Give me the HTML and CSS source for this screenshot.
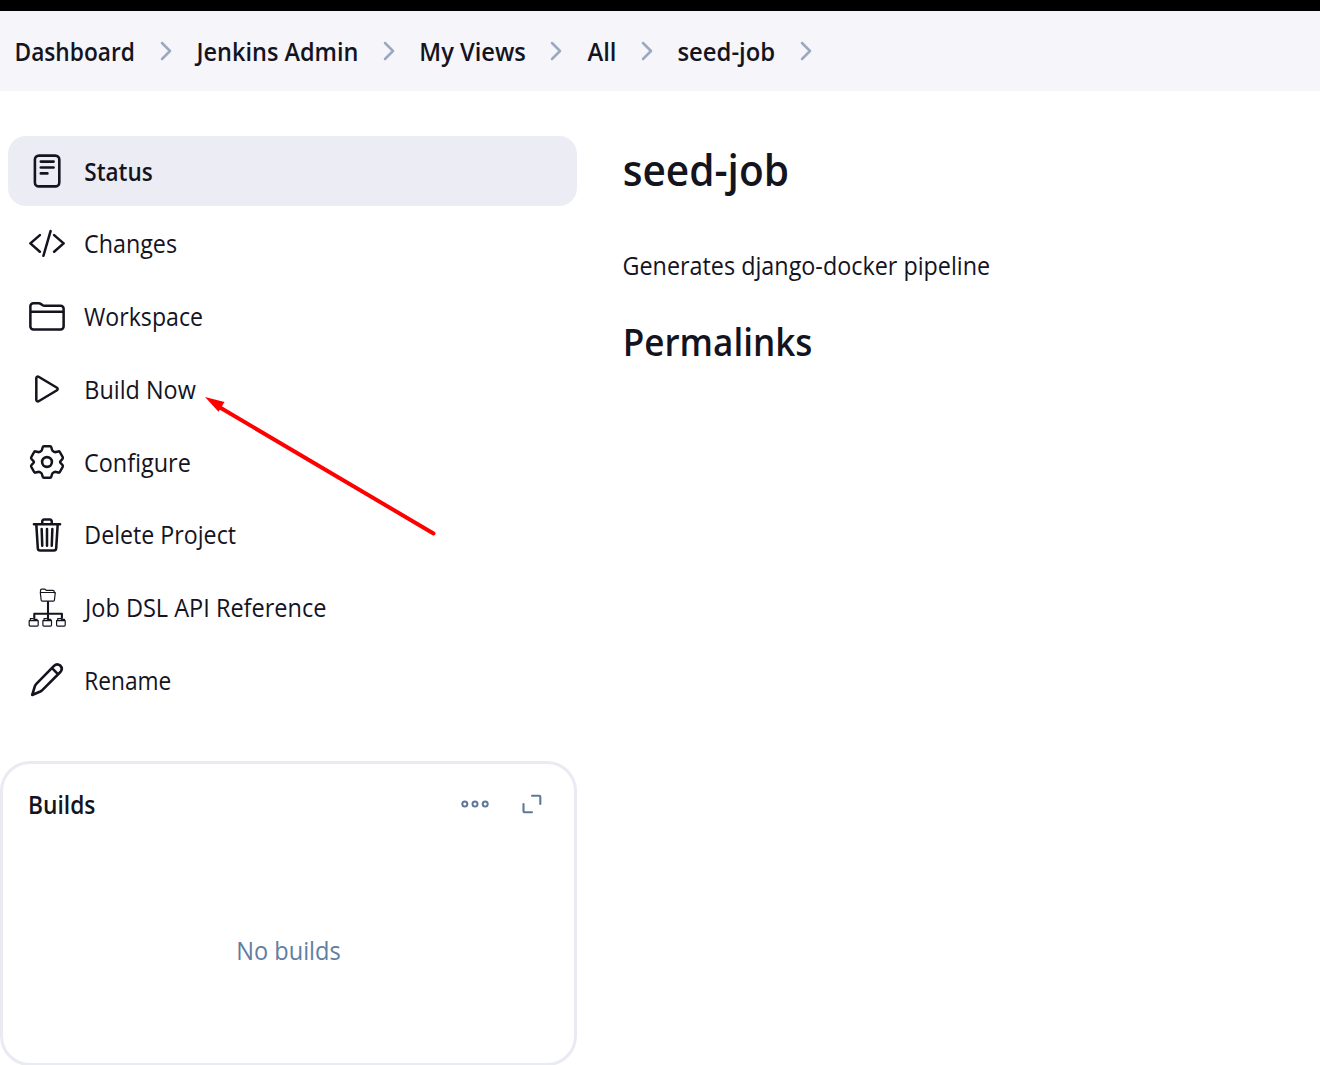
FILE: index.html
```html
<!DOCTYPE html>
<html lang="en">
<head>
<meta charset="utf-8">
<title>seed-job [Jenkins]</title>
<link rel="stylesheet" href="styles.css">
</head>
<body>
<div class="topbar"></div>
<nav class="breadcrumbs">
  <a class="crumb crumb-dashboard">Dashboard</a>
  <svg class="chevron" viewBox="0 0 12 20"><path d="M2 2l8 8-8 8"/></svg>
  <a class="crumb crumb-admin">Jenkins Admin</a>
  <svg class="chevron" viewBox="0 0 12 20"><path d="M2 2l8 8-8 8"/></svg>
  <a class="crumb crumb-views">My Views</a>
  <svg class="chevron" viewBox="0 0 12 20"><path d="M2 2l8 8-8 8"/></svg>
  <a class="crumb crumb-all">All</a>
  <svg class="chevron" viewBox="0 0 12 20"><path d="M2 2l8 8-8 8"/></svg>
  <a class="crumb crumb-job">seed-job</a>
  <svg class="chevron" viewBox="0 0 12 20"><path d="M2 2l8 8-8 8"/></svg>
</nav>
<div class="page">
  <aside class="side">
    <div class="tasks">
      <a class="task active">
        <svg class="icon" viewBox="0 0 38 38"><rect x="6.900" y="3.600" width="24.400" height="30.800" rx="4"/><path d="M12.800 9.600h12.800M12.800 15.500h12.800M12.800 21.400h6.600"/></svg>
        <span class="t-status">Status</span>
      </a>
      <a class="task">
        <svg class="icon" viewBox="0 8 512 512"><g class="wide"><path d="M160 368L32 256l128-112M352 368l128-112-128-112M304 90l-96 332"/></g></svg>
        <span class="t-changes">Changes</span>
      </a>
      <a class="task">
        <svg class="icon" viewBox="0 8 512 512"><g class="wide"><path d="M440 432H72a40 40 0 01-40-40V120a40 40 0 0140-40h75.890a40 40 0 0122.190 6.720l27.840 18.560a40 40 0 0022.190 6.720H440a40 40 0 0140 40v240a40 40 0 01-40 40zM32 192h448"/></g></svg>
        <span class="t-workspace">Workspace</span>
      </a>
      <a class="task">
        <svg class="icon" viewBox="0 0 512 512"><g class="wide"><path d="M112 111v290c0 17.440 17 28.520 31 20.160l247.900-148.370c12.120-7.250 12.120-26.330 0-33.580L143 90.840c-14-8.360-31 2.720-31 20.160z"/></g></svg>
        <span class="t-build">Build Now</span>
      </a>
      <a class="task">
        <svg class="icon" viewBox="0 0 38 38"><path transform="translate(1.100 0) scale(.942 1)" d="M15.700 3.300h6.600q1 0 1.300 1l.8 2.700q.3 1 1.300 1.400l1 .5q.8.400 1.800.2l2.700-.7q1-.2 1.500.7l3 5.100q.5.900-.2 1.600l-1.900 2q-.7.800-.7 1.200t.7 1.200l1.900 2q.7.800.2 1.600l-3 5.100q-.5.900-1.500.7l-2.700-.7q-1-.2-1.800.2l-1 .5q-1 .4-1.300 1.400l-.8 2.700q-.3 1-1.300 1h-6.600q-1 0-1.300-1l-.8-2.700q-.3-1-1.300-1.400l-1-.5q-.8-.4-1.800-.2l-2.700.7q-1 .2-1.500-.7l-3-5.100q-.5-.9.2-1.600l1.900-2q.7-.8.7-1.200t-.7-1.200l-1.900-2q-.7-.8-.2-1.600l3-5.100q.5-.9 1.500-.7l2.700.7q1 .2 1.800-.2l1-.5q1-.4 1.300-1.400l.8-2.700q.3-1 1.300-1z"/><circle cx="19" cy="19" r="4.900"/></svg>
        <span class="t-configure">Configure</span>
      </a>
      <a class="task">
        <svg class="icon" viewBox="0 0 512 512"><g class="wide"><path d="M112 112l20 320c.950 18.490 14.400 32 32 32h184c17.670 0 30.870-13.510 32-32l20-320M80 112h352M192 112V72a23.930 23.930 0 0124-24h80a23.930 23.930 0 0124 24v40M256 176v224M184 176l8 224M328 176l-8 224"/></g></svg>
        <span class="t-delete">Delete Project</span>
      </a>
      <a class="task">
        <svg class="icon" viewBox="0 0 38 38"><path class="branch" d="M20 13v17M6.300 29v-4.300h27.600V29"/><g class="thin"><path d="M12.500 3.200V1.400q0-1.200 1.200-1.200h3.200l1.400 1.100h6.400q1.600 0 1.600 1.600v.8M12.300 3.500h15l-.9 7.800q-.1.900-1 .9H14.200q-.9 0-1-.9z"/><path d="M2.300 31.500v-1.900h3l.8.800h3v1.100M1.200 31.600h9v4.500q0 1-1 1h-7q-1 0-1-1zM16 31.500v-1.900h3l.8.800h3v1.100M14.900 31.600h8.600v4.500q0 1-1 1h-6.600q-1 0-1-1zM29.700 31.500v-1.900h3l.8.800h3v1.100M28.600 31.600h8.600v4.500q0 1-1 1h-6.600q-1 0-1-1z"/></g></svg>
        <span class="t-dsl">Job DSL API Reference</span>
      </a>
      <a class="task">
        <svg class="icon" viewBox="0 0 38 38"><path d="M4.200 34l2.700-8.800q.4-1.200 1.200-2L26 4.900q3-3 6.200-.4 3 3.200.2 6.500L14.300 29.100q-.8.800-2 1.400zM24 7.200l6.200 6.200"/></svg>
        <span class="t-rename">Rename</span>
      </a>
    </div>
    <section class="builds">
      <header class="builds-head">
        <h2>Builds</h2>
        <svg class="dots" viewBox="0 0 28 10"><circle cx="3.800" cy="5" r="2.500"/><circle cx="14" cy="5" r="2.500"/><circle cx="24.200" cy="5" r="2.500"/></svg>
        <svg class="expand" viewBox="0 0 20 20"><path d="M10 1.700h7.300q1 0 1 1V10M1.500 10v7.300q0 1 1 1H10"/></svg>
      </header>
      <p class="empty"><span>No builds</span></p>
    </section>
  </aside>
  <main class="main">
    <h1>seed-job</h1>
    <p class="description">Generates django-docker pipeline</p>
    <h2 class="permalinks">Permalinks</h2>
  </main>
</div>
<svg class="arrow" viewBox="0 0 240 150"><path class="shaft" d="M20 12.500l213.500 126"/><path class="head" d="M5 2l19.500 5-6 9.800z"/></svg>
</body>
</html>
```
FILE: styles.css
```css
* { box-sizing: border-box; }
body {
  margin: 0;
  height: 1065px;
  overflow: hidden;
  position: relative;
  background: #fff;
  color: #14141f;
  font-family: "Open Sans", "Noto Sans", sans-serif;
  font-size: 25px;
  line-height: 36px;
}
h1, h2, p { margin: 0; font-weight: 600; }
svg { display: block; flex: none; fill: none; stroke: currentColor; stroke-linecap: round; stroke-linejoin: round; }
.topbar { height: 11px; background: #000; }
.breadcrumbs {
  height: 80px;
  padding: 0 0 0 15px;
  display: flex;
  align-items: center;
  background: #f5f5fa;
  font-weight: 600;
}
/* Labels are condensed slightly from their left edge. */
.crumb, .task span, h1, h2, .description { transform-origin: 0 50%; }
.crumb { white-space: nowrap; padding-bottom: 1px; }
.crumb-dashboard { width: 120px; transform: translateX(-.5px) scaleX(.908); }
.crumb-admin { width: 162px; transform: translateX(.5px) scaleX(.939); }
.crumb-views { width: 106px; transform: translateX(.3px) scaleX(.948); }
.crumb-all { width: 30px; transform: translateX(1.500px) scaleX(.95); }
.crumb-job { width: 98px; transform: translateX(.5px) scaleX(.954); }
.chevron { width: 12px; height: 20px; margin: 0 24px 0 25px; color: #9aa9c0; stroke-width: 2.500; }
.page { display: flex; gap: 46px; }
.side { width: 577px; padding-top: 45px; }
.tasks { display: flex; flex-direction: column; gap: 2.750px; padding-left: 8px; }
.task {
  height: 70px;
  padding-left: 20px;
  display: flex;
  align-items: center;
  gap: 18px;
  border-radius: 18px;
  white-space: nowrap;
}
.task span { padding-bottom: 1px; }
.active { background: #ececf5; font-weight: 600; }
.task .t-status { padding-bottom: 0; transform: translateX(.3px) scaleX(.9); }
.t-changes { transform: scaleX(.932); }
.t-workspace { transform: scaleX(.925); }
.t-build { transform: translateX(.3px) scaleX(.936); }
.t-configure { transform: scaleX(.937); }
.t-delete { transform: translateX(.3px) scaleX(.928); }
.t-dsl { transform: translateX(1px) scaleX(.94); }
.t-rename { transform: translateX(.3px) scaleX(.908); }
.icon { width: 38px; height: 38px; stroke-width: 2.600; overflow: visible; }
.wide { stroke-width: 34; }
.thin { stroke-width: 1.200; }
.branch { stroke-width: 2.100; }
.builds {
  margin-top: 45.500px;
  height: 305px;
  border: 3px solid #eaeaf3;
  border-radius: 30px;
}
.builds-head { display: flex; align-items: center; padding: 20px 32px 0 25px; height: 60px; color: #607898; }
.builds h2 { flex: 1; font-size: 25px; color: #14141f; transform: scaleX(.91); }
.dots { width: 28px; height: 10px; stroke-width: 2; }
.expand { width: 20px; height: 20px; margin-left: 33px; stroke-width: 2.100; }
.empty { text-align: center; font-weight: 400; color: #607ea0; padding-top: 108px; transform: scaleX(.942); }
.main { padding-top: 49px; }
h1 { font-size: 43px; line-height: 60px; transform: translateX(-.3px) scaleX(.944); }
.description { font-weight: 400; margin-top: 47px; transform: translateX(-.5px) scaleX(.934); }
.permalinks { font-size: 38px; line-height: 54px; margin-top: 31px; transform: translateX(-.3px) scaleX(.923); }
.arrow { position: absolute; left: 200px; top: 395px; width: 240px; height: 150px; }
.shaft { stroke: #f00; stroke-width: 4; }
.head { fill: #f00; stroke: none; }
```
